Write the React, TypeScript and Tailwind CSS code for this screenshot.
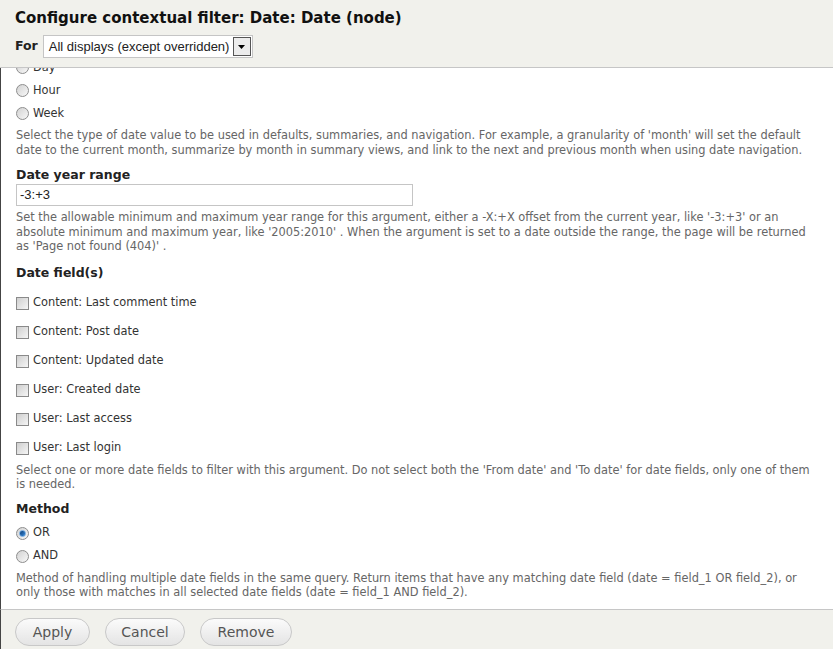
import React from "react";

const font = { fontFamily: '"DejaVu Sans", Verdana, sans-serif' };

function Radio({ checked }: { checked?: boolean }) {
  return (
    <span className="relative inline-block w-[13px] h-[13px] rounded-full border border-[#8d8d8d] bg-gradient-to-br from-[#d2d2d2] to-[#f8f8f8] shrink-0">
      {checked && (
        <span className="absolute left-[2px] top-[2px] w-[7px] h-[7px] rounded-full bg-gradient-to-br from-[#0b3f7a] to-[#3a8ad8] border border-[#6aa6e0]" />
      )}
    </span>
  );
}

function Checkbox() {
  return (
    <span className="inline-block w-[13px] h-[13px] border border-[#8a8a8a] bg-gradient-to-br from-[#cfcfcf] to-[#f6f6f6] shrink-0" />
  );
}

function RadioRow({ label, checked }: { label: string; checked?: boolean }) {
  return (
    <div className="h-[23px] flex items-center gap-[4px] text-[11.4px] text-[#333]">
      <Radio checked={checked} />
      <span>{label}</span>
    </div>
  );
}

function CheckRow({ label }: { label: string }) {
  return (
    <div className="h-[29px] flex items-center gap-[4px] text-[11.4px] text-[#333]">
      <Checkbox />
      <span>{label}</span>
    </div>
  );
}

function Desc({ children }: { children: React.ReactNode }) {
  return <div className="text-[11.4px] leading-[14.5px] text-[#666]">{children}</div>;
}

function Heading({ children }: { children: React.ReactNode }) {
  return <div className="h-[16px] flex items-center text-[12.5px] font-bold text-[#222]">{children}</div>;
}

function Btn({ label, w }: { label: string; w: string }) {
  return (
    <button
      className={`${w} h-[28px] rounded-full border border-[#c8c8c8] bg-gradient-to-b from-[#fbfbfb] to-[#e4e4e4] text-[14px] text-[#555] flex items-center justify-center`}
    >
      {label}
    </button>
  );
}

export default function App() {
  return (
    <div className="w-[833px] h-[649px] bg-white flex flex-col overflow-hidden" style={font}>
      <div className="h-[68px] bg-[#f1f1ec] border-b border-[#c6c6c6] px-[15px] pt-[7px] shrink-0">
        <div className="h-[22px] flex items-center text-[15px] font-bold text-[#111]">
          Configure contextual filter: Date: Date (node)
        </div>
        <div className="mt-[6px] flex items-center gap-[5px]">
          <span className="text-[12.5px] font-bold text-[#222]">For</span>
          <div className="w-[210px] h-[23px] border border-[#c5c5c5] bg-white flex items-center pl-[5px] pr-[1px]">
            <span
              className="flex-1 text-[13px] text-[#222]"
              style={{ fontFamily: '"Liberation Sans", Arial, sans-serif' }}
            >
              All displays (except overridden)
            </span>
            <span className="w-[18px] h-[19px] border border-[#555] bg-[#ececec] flex items-center justify-center">
              <svg width="7" height="4" viewBox="0 0 7 4">
                <path d="M0 0h7L3.5 4z" fill="#000" />
              </svg>
            </span>
          </div>
        </div>
      </div>
      <div className="flex-1 border-l border-[#444] overflow-hidden">
        <div className="px-[15px] -mt-[12px]">
          <RadioRow label="Day" />
          <RadioRow label="Hour" />
          <RadioRow label="Week" />
          <div className="mt-[3px]">
            <Desc>
              Select the type of date value to be used in defaults, summaries, and navigation. For example, a granularity of 'month' will set the default date to the current month, summarize by month in summary views, and link to the next and previous month when using date navigation.
            </Desc>
          </div>
          <div className="mt-[10px]">
            <Heading>Date year range</Heading>
          </div>
          <div
            className="mt-[1px] w-[397px] h-[22px] border border-[#c5c5c5] flex items-center px-[3px] text-[13px] text-[#222]"
            style={{ fontFamily: '"Liberation Sans", Arial, sans-serif' }}
          >
            -3:+3
          </div>
          <div className="mt-[4px]">
            <Desc>
              Set the allowable minimum and maximum year range for this argument, either a -X:+X offset from the current year, like '-3:+3' or an absolute minimum and maximum year, like '2005:2010' . When the argument is set to a date outside the range, the page will be returned as 'Page not found (404)' .
            </Desc>
          </div>
          <div className="mt-[12px]">
            <Heading>Date field(s)</Heading>
          </div>
          <div className="mt-[7px]">
            <CheckRow label="Content: Last comment time" />
            <CheckRow label="Content: Post date" />
            <CheckRow label="Content: Updated date" />
            <CheckRow label="User: Created date" />
            <CheckRow label="User: Last access" />
            <CheckRow label="User: Last login" />
          </div>
          <Desc>
            Select one or more date fields to filter with this argument. Do not select both the 'From date' and 'To date' for date fields, only one of them is needed.
          </Desc>
          <div className="mt-[10px]">
            <Heading>Method</Heading>
          </div>
          <div className="mt-[4px]">
            <RadioRow label="OR" checked />
            <RadioRow label="AND" />
          </div>
          <div className="mt-[3px]">
            <Desc>
              Method of handling multiple date fields in the same query. Return items that have any matching date field (date = field_1 OR field_2), or only those with matches in all selected date fields (date = field_1 AND field_2).
            </Desc>
          </div>
        </div>
      </div>
      <div className="h-[40px] shrink-0 bg-[#f1f1ec] border-t border-[#c6c6c6] border-l border-l-[#444] px-[14px] pt-[8px] flex gap-[15px] items-start">
        <Btn label="Apply" w="w-[75px]" />
        <Btn label="Cancel" w="w-[80px]" />
        <Btn label="Remove" w="w-[92px]" />
      </div>
    </div>
  );
}
